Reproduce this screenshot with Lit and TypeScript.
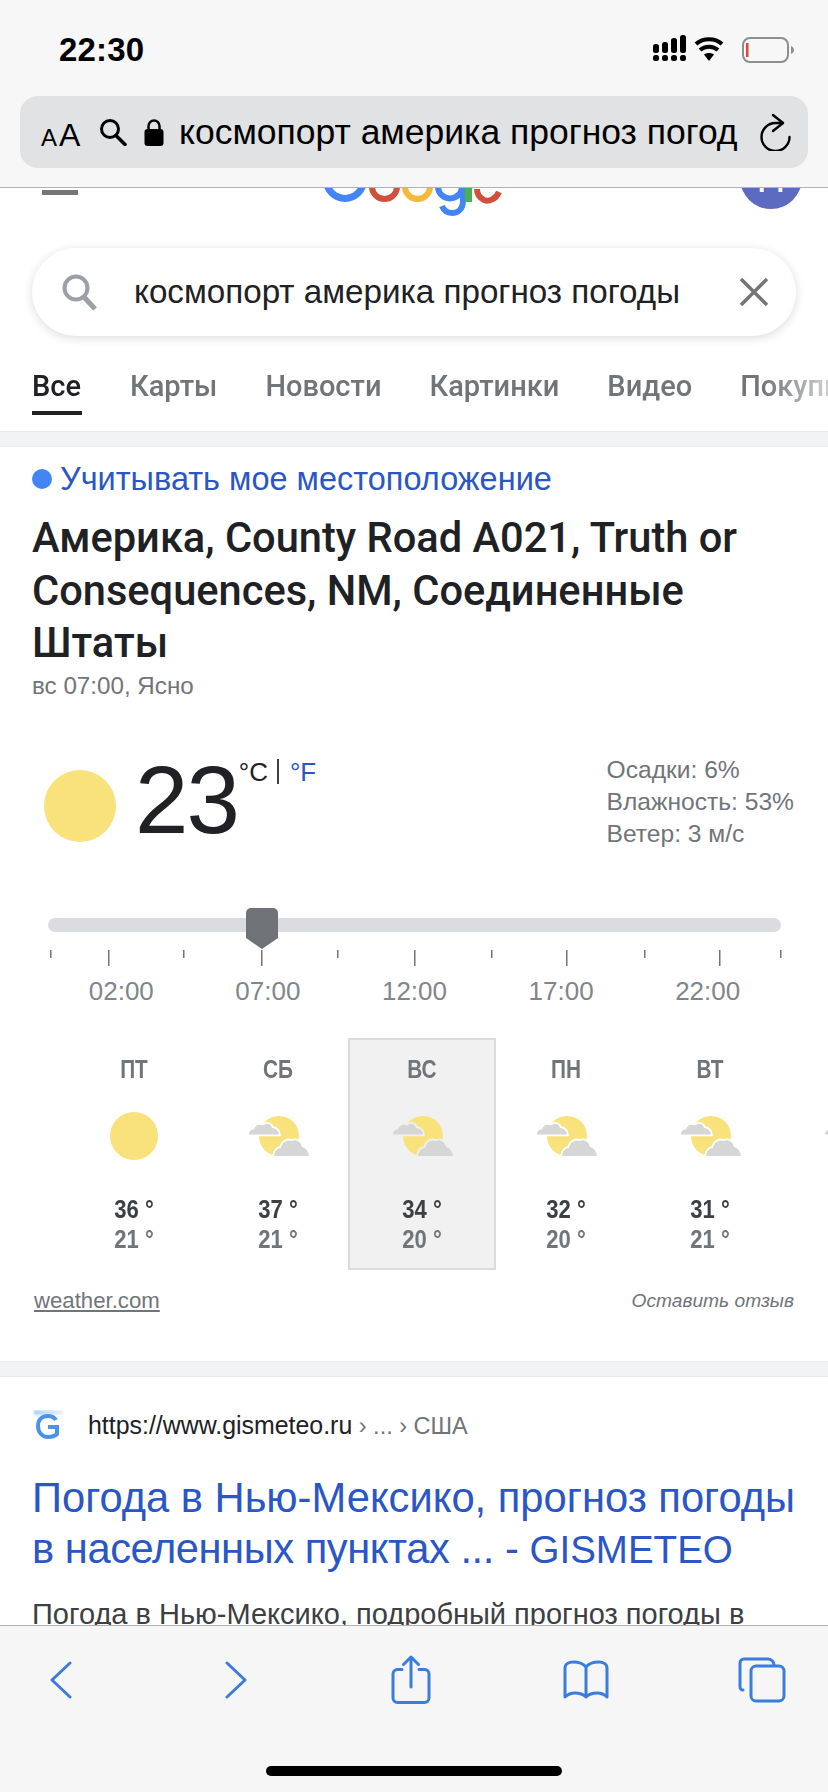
import { LitElement, html, css, svg } from 'lit';
import { customElement } from 'lit/decorators.js';

const days = [
  { name: 'ПТ', hi: 36, lo: 21, icon: 'sun' },
  { name: 'СБ', hi: 37, lo: 21, icon: 'cloudy' },
  { name: 'ВС', hi: 34, lo: 20, icon: 'cloudy', active: true },
  { name: 'ПН', hi: 32, lo: 20, icon: 'cloudy' },
  { name: 'ВТ', hi: 31, lo: 21, icon: 'cloudy' },
  { name: '', hi: '', lo: '', icon: 'cloudy' },
];
const hours = ['02:00', '07:00', '12:00', '17:00', '22:00'];
const tabs = ['Все', 'Карты', 'Новости', 'Картинки', 'Видео', 'Покупки'];
// tick x positions relative to the slider start, major ticks are the long ones
const ticks = [
  [3, 0], [61, 1], [136, 0], [214, 1], [290, 0], [367, 1], [444, 0], [519, 1], [597, 0], [672, 1], [733, 0],
];

const cloud = svg`<path d="M0 18.500c0-3 2-5 5-5 1-4 5-6 9-4 3-3 8-2 9 2.500 4 0 7 3 7 6.500z"/>`;
const cloudBig = svg`<path d="M25 41c0-5 3-9 7-9 1-6 6-9 11-7 4-2 9 1 10 6 4 1 7 5 7 10z"/>`;

const weatherIcon = (kind: string) =>
  kind === 'sun'
    ? html`<span class="sun small"></span>`
    : html`<svg class="cloudy" width="60" height="40" viewBox="0 0 60 40">
        <circle cx="30" cy="20" r="20" fill="#f9e27b"/>
        <g class="cloud">${cloud}${cloudBig}</g>
      </svg>`;

@customElement('app-root')
export class AppRoot extends LitElement {
  static styles = css`
    :host {
      display: flex;
      flex-direction: column;
      width: 828px;
      height: 1792px;
      overflow: hidden;
      background: #fff;
      font-family: "Liberation Sans", Arial, sans-serif;
      color: #202124;
      --muted: #70757a;
      --link: #2a56c6;
    }
    svg { display: block; flex: none; }

    /* safari top */
    .top {
      flex: none;
      height: 188px;
      box-sizing: border-box;
      background: #f7f7f8;
      border-bottom: 1px solid #b2b2b2;
      padding: 0 20px;
    }
    .status {
      height: 96px;
      display: flex;
      align-items: flex-start;
      justify-content: space-between;
      padding: 34px 14px 0 39px;
      box-sizing: border-box;
    }
    .time { font-size: 33px; font-weight: 700; line-height: 32px; letter-spacing: .2px; color: #000; }
    .url {
      height: 72px;
      background: #e1e2e3;
      border-radius: 18px;
      display: flex;
      align-items: center;
      padding: 0 16px 0 21px;
      color: #000;
    }
    .aa { width: 40px; display: flex; align-items: baseline; font-size: 32px; line-height: 32px; margin-top: 8px; }
    .aa small { font-size: 24px; margin-right: 2px; }
    .url .glass { margin-left: 18px; }
    .url .lock { margin-left: 17px; }
    .url-text { flex: 1; font-size: 35.5px; line-height: 42px; margin-left: 15px; white-space: nowrap; overflow: hidden; }

    /* page */
    .page { flex: 1; min-height: 0; overflow: hidden; }
    .gbar {
      height: 28px;
      overflow: hidden;
      display: flex;
      justify-content: space-between;
      align-items: flex-start;
      padding: 0 26px 0 42px;
    }
    .burger { width: 36px; height: 5px; margin-top: 2px; background: #757575; }
    .logo { margin-left: 8px; }
    .avatar {
      width: 62px;
      height: 62px;
      margin-top: -41px;
      border-radius: 50%;
      background: #5c6bc0;
      color: #fff;
      font-size: 40px;
      line-height: 62px;
      text-align: center;
    }
    .search {
      height: 88px;
      margin: 32px 32px 0 32px;
      border-radius: 44px;
      background: #fff;
      box-shadow: 0 2px 10px rgba(32, 33, 36, .16);
      display: flex;
      align-items: center;
      padding: 0 27px 0 30px;
    }
    .search-text { flex: 1; font-size: 33.2px; margin-left: 36px; white-space: nowrap; }
    .tabs {
      height: 95px;
      display: flex;
      gap: 48px;
      padding: 30px 0 0 32px;
      box-sizing: border-box;
      overflow: hidden;
      -webkit-mask-image: linear-gradient(90deg, #000 92%, rgba(0,0,0,.35) 100%);
    }
    .tab { flex: none; height: 49px; font-size: 29px; line-height: 40px; color: var(--muted); font-family: Roboto, sans-serif; font-weight: 500; box-sizing: border-box; }
    .tab.on { color: #202124; border-bottom: 4px solid #202124; padding-right: 1px; }
    .band { height: 16px; box-sizing: border-box; background: #f1f3f4; border-top: 1px solid #e8eaed; border-bottom: 1px solid #e8eaed; }

    .card { padding: 16px 34px 0 32px; height: 914px; box-sizing: border-box; }
    .here { display: flex; align-items: center; gap: 8px; font-size: 32.5px; line-height: 32px; color: var(--link); white-space: nowrap; }
    .dot { width: 20px; height: 20px; border-radius: 50%; background: #4285f4; }
    .place { margin: 17px 0 0; font-family: Roboto, sans-serif; font-size: 41.6px; line-height: 52.5px; font-weight: 500; }
    .sub { font-size: 24.2px; line-height: 30px; margin-top: 1px; color: var(--muted); }
    .now { display: flex; height: 96px; margin-top: 53px; }
    .sun { flex: none; display: block; width: 72px; height: 72px; margin: 16px 0 0 12px; border-radius: 50%; background: #f9e27b; }
    .sun.small { width: 48px; height: 48px; margin: 0; }
    .deg { font-size: 96px; line-height: 92px; margin-left: 19px; letter-spacing: -2px; }
    .units { display: flex; font-size: 26px; line-height: 30px; height: 30px; margin: 3px 0 0 1px; color: #202124; }
    .units i { font-style: normal; width: 2px; height: 25px; margin: 2px 11px 0 9px; background: #3c4043; }
    .units a { color: var(--link); }
    .facts { margin-left: auto; font-size: 24.6px; line-height: 32px; color: var(--muted); }

    .slider { position: relative; height: 14px; width: 733px; margin: 68px 0 0 16px; background: #dadce0; border-radius: 7px; }
    .thumb { position: absolute; left: 198px; top: -10px; }
    .scale { margin: 18px 0 0 15px; }
    .hours { display: grid; grid-template-columns: repeat(5, 146.6px); margin: 10px 0 0 16px; font-size: 26px; line-height: 30px; color: #80868b; text-align: center; }

    .days { display: grid; grid-template-columns: repeat(6, 144px); margin: 34px 0 0 30px; }
    .day { height: 228px; padding-top: 14px; box-sizing: border-box; text-align: center; --cell: #fff; }
    .day.on { background: #f1f1f1; outline: 2px solid #dcdcdc; --cell: #f1f1f1; }
    .day b, .day span.t { display: block; height: 30px; font-size: 26px; line-height: 30px; font-weight: 700; transform: scaleX(.8); }
    .day span.t { transform: scaleX(.85); }
    .day b { color: #70757a; }
    .glyph { height: 48px; margin-top: 28px; display: flex; align-items: center; justify-content: center; }
    .cloudy { margin-left: 2px; }
    .cloud { fill: #d6d6d6; stroke: var(--cell); stroke-width: 3.5; paint-order: stroke; }
    .hi { margin-top: 34px; color: #3c4043; }
    .lo { color: #70757a; }
    .foot { display: flex; justify-content: space-between; align-items: center; margin: 18px 0 0 2px; font-size: 22.2px; line-height: 30px; color: var(--muted); }
    .foot a { text-decoration: underline; }
    .foot i { font-size: 19.2px; }

    .result { padding: 32px 16px 0 32px; }
    .cite { display: flex; align-items: center; gap: 24px; height: 32px; font-size: 24.9px; }
    .cite em { font-style: normal; font-size: 23.5px; color: var(--muted); }
    .title { margin-top: 32px; font-size: 41.7px; line-height: 50.5px; color: var(--link); }
    .title .tight { letter-spacing: -.45px; }
    .title .brand { font-size: 38.5px; letter-spacing: 0; }
    .snip { margin-top: 22px; font-size: 29px; line-height: 34px; color: #3c4043; white-space: nowrap; }

    /* safari bottom */
    .bottom { flex: none; height: 167px; box-sizing: border-box; background: #f6f6f7; border-top: 1px solid #b2b2b2; position: relative; }
    .tools { display: flex; align-items: center; padding: 29px 0 0 49px; stroke: #3b7ddd; fill: none; stroke-width: 3; stroke-linecap: round; stroke-linejoin: round; }
    .tools .fwd { margin-left: 151px; }
    .tools .share { margin-left: 143px; }
    .tools .book { margin-left: 132px; }
    .tools .pages { margin-left: 129px; }
    .home { position: absolute; left: 266px; bottom: 16px; width: 296px; height: 10px; border-radius: 5px; background: #000; }
  `;

  render() {
    return html`
      <div class="top">
        <div class="status">
          <span class="time">22:30</span>
          <svg width="141" height="30" viewBox="0 0 141 30">
            <g fill="#000">
              <rect x="0" y="10" width="6" height="9" rx="2.500"/><rect x="9" y="8" width="6" height="11" rx="2.500"/>
              <rect x="18" y="4" width="6" height="15" rx="2.500"/><rect x="27" y="1" width="6" height="18" rx="2.500"/>
              <rect x="0" y="21" width="6" height="6" rx="2.500"/><rect x="9" y="21" width="6" height="6" rx="2.500"/>
              <rect x="18" y="21" width="6" height="6" rx="2.500"/><rect x="27" y="21" width="6" height="6" rx="2.500"/>
              <path d="M61 20.500l-5 6.500-5-6.500c3-2 7-2 10 0z"/>
            </g>
            <g fill="none" stroke="#000" stroke-width="4">
              <path d="M47 16c5-4.500 13-4.500 18 0"/>
              <path d="M43 10c7-6.500 19-6.500 26 0"/>
            </g>
            <rect x="90" y="4" width="45" height="24" rx="7" fill="none" stroke="#8e8e8e" stroke-width="2"/>
            <rect x="93" y="9" width="2.500" height="14" fill="#d9483b"/>
            <path d="M138 12c2 1 3 2.500 3 4s-1 3-3 4z" fill="#8e8e8e"/>
          </svg>
        </div>
        <div class="url">
          <span class="aa"><small>A</small>A</span>
          <svg class="glass" width="28" height="28" viewBox="0 0 28 28" fill="none" stroke="#000" stroke-width="3"><circle cx="11" cy="11" r="8.500"/><path d="M17 17.500l9 9" stroke-linecap="round" stroke-width="3.500"/></svg>
          <svg class="lock" width="20" height="27" viewBox="0 0 20 27"><rect x="0.500" y="10" width="19" height="17" rx="3"/><path d="M4.500 11V7a5.500 5.500 0 0 1 11 0v4" fill="none" stroke="#000" stroke-width="2.500"/></svg>
          <span class="url-text">космопорт америка прогноз погод</span>
          <svg width="34" height="38" viewBox="0 0 34 38" fill="none" stroke="#000" stroke-width="2.400" stroke-linecap="round" stroke-linejoin="round"><path d="M25 10h-7.500A14 14 0 1 0 31.500 24"/><path d="M15 2l10 8-10 8"/></svg>
        </div>
      </div>

      <div class="page">
        <div class="gbar">
          <span class="burger"></span>
          <svg class="logo" width="180" height="28" viewBox="0 0 180 28" fill="none">
            <circle cx="22" cy="-8" r="18.500" stroke="#4285f4" stroke-width="7"/>
            <circle cx="61.500" cy="-1.500" r="12.500" stroke="#d0503c" stroke-width="6"/>
            <circle cx="94.500" cy="-1.500" r="12.500" stroke="#f4b93a" stroke-width="6"/>
            <circle cx="127" cy="-1.500" r="12" stroke="#4285f4" stroke-width="6"/>
            <path d="M140 -4V13c0 8-5 12-11 12-4 0-8-2-10-7" stroke="#4285f4" stroke-width="6"/>
            <rect x="142" y="-4" width="7" height="18" fill="#4caf50"/>
            <path d="M176 4c-3 7-10 10-15 8-4-2-7-6-7-11" stroke="#d0503c" stroke-width="6"/>
          </svg>
          <span class="avatar">Н</span>
        </div>
        <div class="search">
          <svg width="36" height="36" viewBox="0 0 36 36" fill="none" stroke="#9aa0a6" stroke-width="4"><circle cx="14" cy="14" r="11.500"/><path d="M22 23l11 12" stroke-width="5"/></svg>
          <span class="search-text">космопорт америка прогноз погоды</span>
          <svg width="30" height="30" viewBox="0 0 30 30" stroke="#757575" stroke-width="3.500"><path d="M2 2l26 26M28 2L2 28"/></svg>
        </div>
        <div class="tabs">
          ${tabs.map((t, i) => html`<span class="tab ${i === 0 ? 'on' : ''}">${t}</span>`)}
        </div>
        <div class="band"></div>

        <div class="card">
          <div class="here"><span class="dot"></span>Учитывать мое местоположение</div>
          <h2 class="place">Америка, County Road A021, Truth or Consequences, NM, Соединенные Штаты</h2>
          <div class="sub">вс 07:00, Ясно</div>
          <div class="now">
            <span class="sun"></span>
            <span class="deg">23</span>
            <span class="units">°C<i></i><a>°F</a></span>
            <div class="facts">
              <div>Осадки: 6%</div>
              <div>Влажность: 53%</div>
              <div>Ветер: 3 м/с</div>
            </div>
          </div>
          <div class="slider">
            <svg class="thumb" width="32" height="41" viewBox="0 0 32 41"><path d="M5 0h22a5 5 0 0 1 5 5v25L16 41 0 30V5a5 5 0 0 1 5-5z" fill="#6f7276"/></svg>
          </div>
          <svg class="scale" width="740" height="16" viewBox="0 0 740 16">
            ${ticks.map(([x, major]) => svg`<rect x=${x} y="0" width="1.500" height=${major ? 16 : 8} fill="#70757a"/>`)}
          </svg>
          <div class="hours">${hours.map((h) => html`<span>${h}</span>`)}</div>
          <div class="days">
            ${days.map((d) => html`
              <div class="day ${d.active ? 'on' : ''}">
                <b>${d.name}</b>
                <div class="glyph">${weatherIcon(d.icon)}</div>
                <span class="t hi">${d.hi === '' ? '' : `${d.hi} °`}</span>
                <span class="t lo">${d.lo === '' ? '' : `${d.lo} °`}</span>
              </div>`)}
          </div>
          <div class="foot"><a>weather.com</a><i>Оставить отзыв</i></div>
        </div>
        <div class="band"></div>

        <div class="result">
          <div class="cite">
            <svg width="32" height="30" viewBox="0 0 32 30">
              <defs><linearGradient id="fav" x1="0" x2="1"><stop offset="0" stop-color="#a9d2f7"/><stop offset="1" stop-color="#e6f2fd"/></linearGradient></defs>
              <path d="M2 0h28l2 5H2z" fill="url(#fav)" style="filter: blur(.8px)"/>
              <path d="M24 10c-2-3-5-4-8-4-6 0-10 4-10 10s4 11 10 11c4 0 7-1 9-3v-7h-9" fill="none" stroke="#4a93ea" stroke-width="4" style="filter: blur(.7px)"/>
            </svg>
            <span>https://www.gismeteo.ru<em> › ... › США</em></span>
          </div>
          <div class="title">Погода в Нью-Мексико, прогноз погоды <span class="tight">в населенных пунктах ... - <span class="brand">GISMETEO</span></span></div>
          <div class="snip">Погода в Нью-Мексико, подробный прогноз погоды в</div>
        </div>
      </div>

      <div class="bottom">
        <div class="tools">
          <svg width="24" height="38" viewBox="0 0 24 38"><path d="M21 2L3 19l18 17"/></svg>
          <svg class="fwd" width="24" height="38" viewBox="0 0 24 38"><path d="M3 2l18 17L3 36"/></svg>
          <svg class="share" width="40" height="49" viewBox="0 0 40 49"><path d="M11 14.500H6.500A4.500 4.500 0 0 0 2 19v24a4.500 4.500 0 0 0 4.500 4.500h27A4.500 4.500 0 0 0 38 43V19a4.500 4.500 0 0 0-4.500-4.500H28"/><path d="M20 32V2M12.500 9.500L20 2l7.500 7.500"/></svg>
          <svg class="book" width="46" height="40" viewBox="0 0 46 40"><path d="M23 7C20 3 15 2 10 2 6 2 2 4 2 8V37c3-3 6-4 10-4 4 0 8 1 11 4 3-3 7-4 11-4 4 0 7 1 10 4V8c0-4-4-6-8-6-5 0-10 1-13 5V37"/></svg>
          <svg class="pages" width="48" height="46" viewBox="0 0 48 46"><path d="M5 33a3 3 0 0 1-3-3V6a4 4 0 0 1 4-4h24a6 6 0 0 1 6 6"/><rect x="13" y="9" width="33" height="35" rx="5"/></svg>
        </div>
        <div class="home"></div>
      </div>
    `;
  }
}
